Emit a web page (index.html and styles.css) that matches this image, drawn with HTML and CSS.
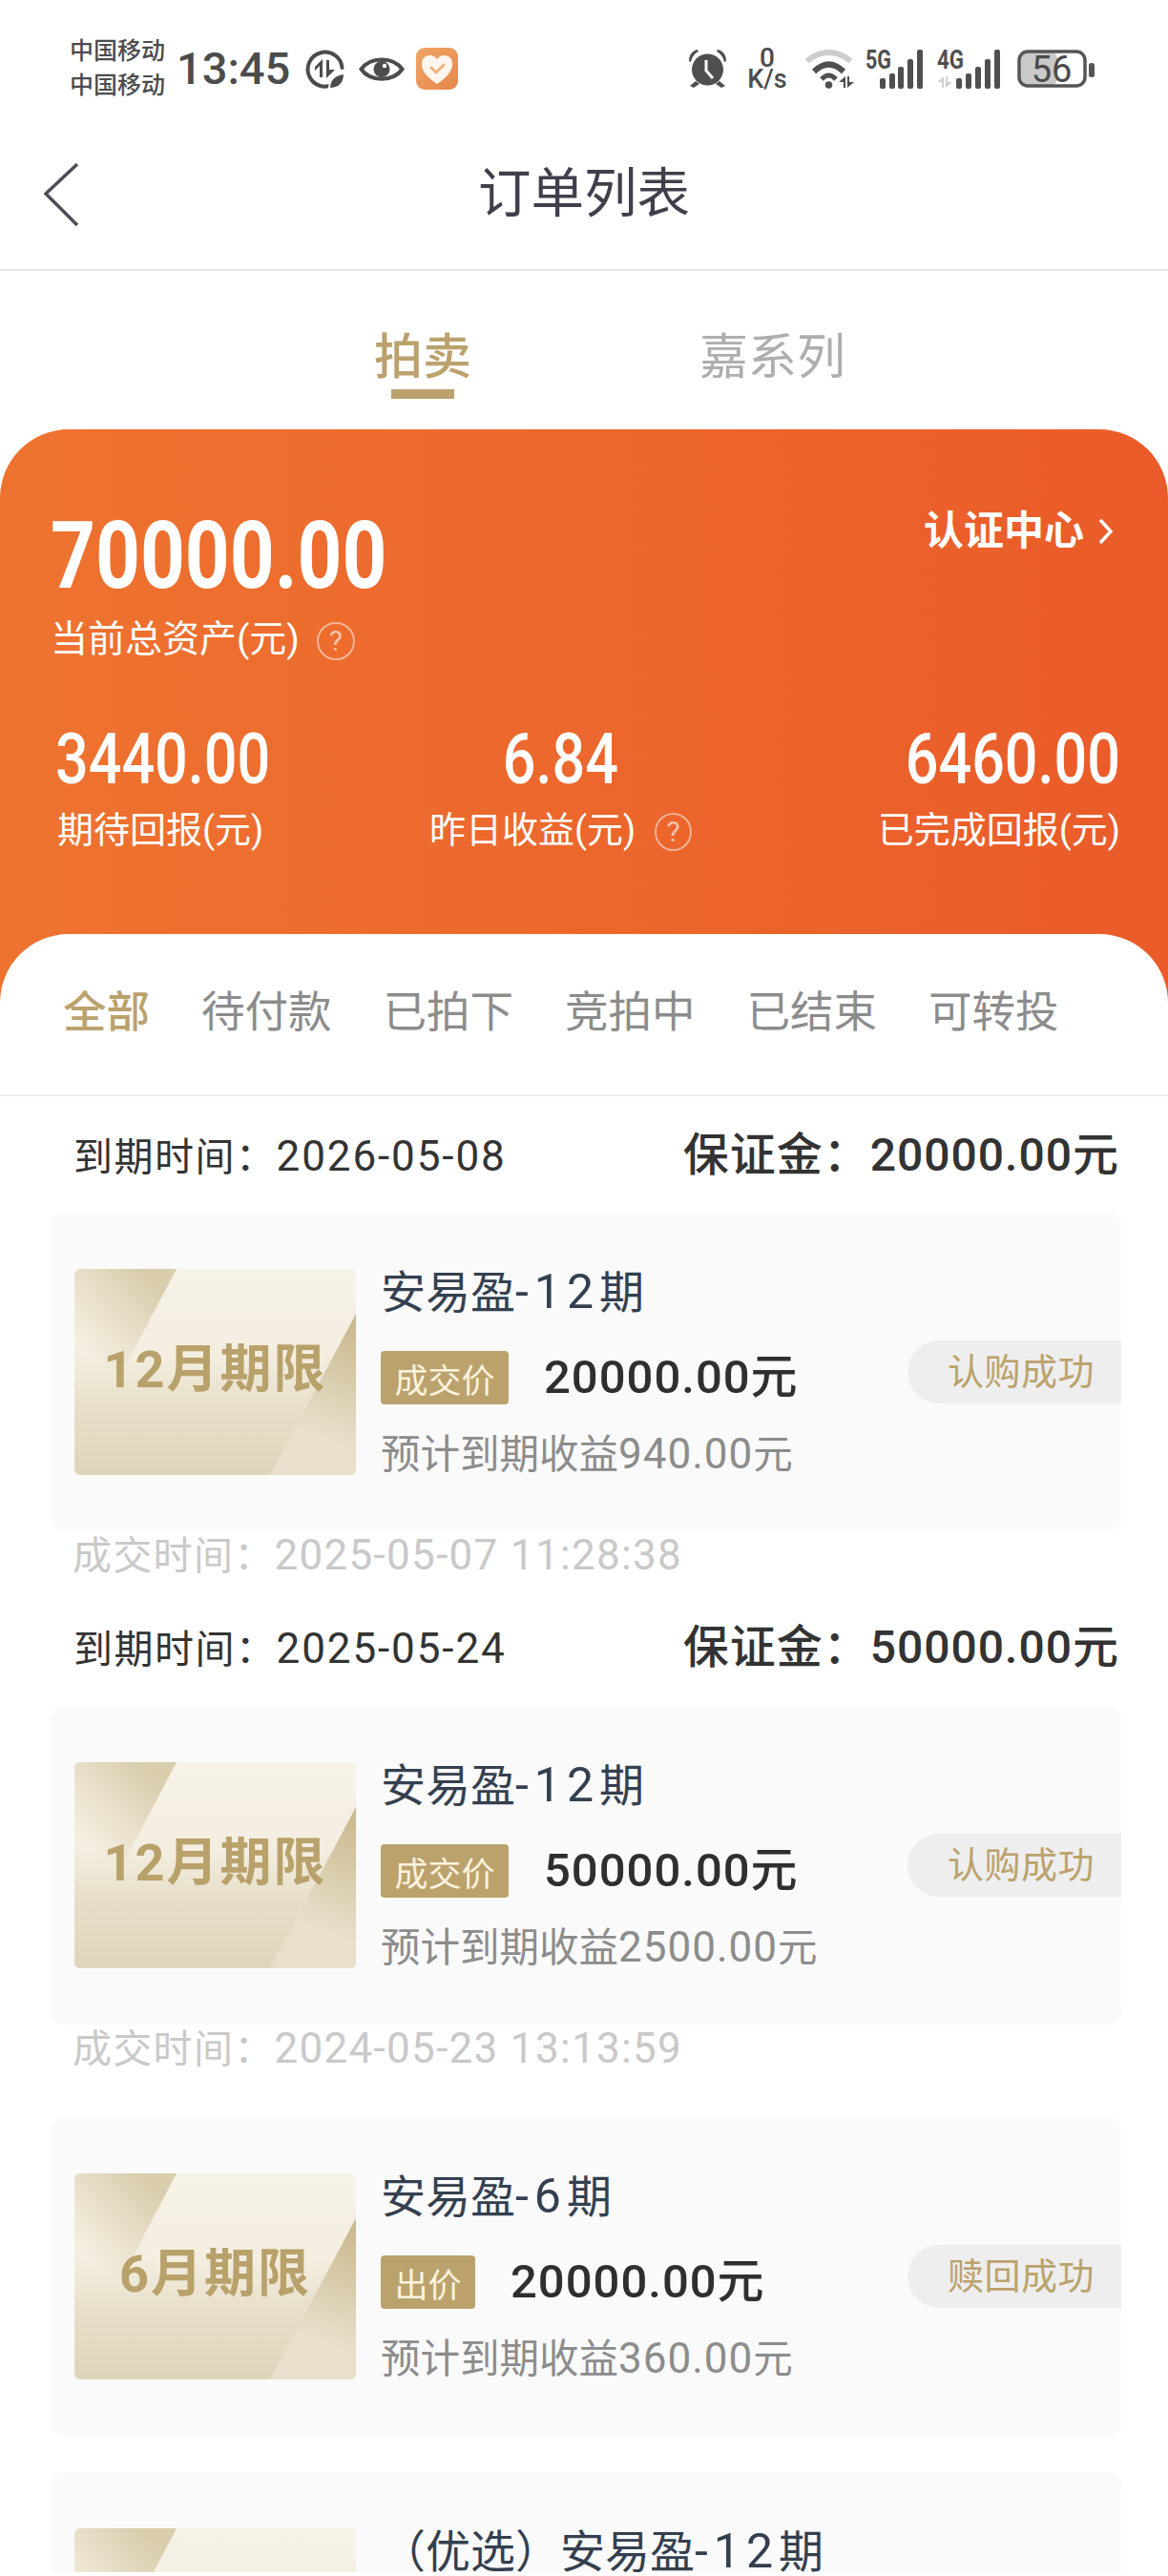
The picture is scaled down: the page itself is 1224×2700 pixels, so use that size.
FILE: index.html
```html
<!DOCTYPE html>
<html lang="zh-CN">
<head>
    <meta charset="UTF-8">
    <meta name="viewport" content="width=device-width, initial-scale=1.0">
    <title>订单列表</title>
    <link rel="stylesheet" href="styles.css">
</head>
<body>
    <svg class="svg-defs" aria-hidden="true">
        <defs>
            <linearGradient id="thumbBase" x1="0" y1="0" x2="0" y2="1">
                <stop offset="0" stop-color="#f6f2e6" />
                <stop offset="0.42" stop-color="#f3eee0" />
                <stop offset="0.68" stop-color="#e6dec8" />
                <stop offset="1" stop-color="#dfd5bb" />
            </linearGradient>
            <linearGradient id="thumbLeft" x1="20" y1="92" x2="88" y2="22" gradientUnits="userSpaceOnUse">
                <stop offset="0" stop-color="#d9cdae" stop-opacity="0" />
                <stop offset="1" stop-color="#d9cdae" />
            </linearGradient>
            <linearGradient id="thumbRight" x1="288" y1="62" x2="245" y2="170" gradientUnits="userSpaceOnUse">
                <stop offset="0" stop-color="#cbbb92" />
                <stop offset="1" stop-color="#e8e0cc" />
            </linearGradient>
            <symbol id="thumbArt" viewBox="0 0 295 216" preserveAspectRatio="none">
                <rect width="295" height="216" fill="url(#thumbBase)" />
                <polygon points="0,0 107,0 50,108 0,108" fill="url(#thumbLeft)" />
                <polygon points="295,47 295,216 205,216" fill="url(#thumbRight)" />
            </symbol>
        </defs>
    </svg>

    <div class="page">
        <!-- 状态栏 -->
        <div class="status-bar">
            <div class="status-left">
                <div class="carrier">
                    <span>中国移动</span>
                    <span>中国移动</span>
                </div>
                <span class="clock">13:45</span>
                <svg class="ic-saver" width="41" height="41" viewBox="0 0 41 41">
                    <path d="M30 36 A18 18 0 1 1 38.500 19" fill="none" stroke="#4c4c4c" stroke-width="4" stroke-linecap="round" />
                    <polygon points="18,10 18,29 15,29 15,17 10,22 10,18" fill="#4c4c4c" />
                    <polygon points="22,11 25,11 25,21 31,21 22,30" fill="#4c4c4c" />
                    <path d="M25 41 C25 31 31 26 41 25 C41 35 36 41 25 41 Z" fill="#4c4c4c" stroke="#fff" stroke-width="2" />
                </svg>
                <svg class="ic-eye" width="48" height="31" viewBox="0 0 48 31">
                    <path d="M2.5 15.5 C12 2 36 2 45.5 15.5 C36 29 12 29 2.5 15.5 Z" fill="none" stroke="#4c4c4c" stroke-width="4" />
                    <circle cx="24" cy="15.5" r="8.5" fill="#4c4c4c" />
                    <circle cx="27" cy="12" r="2.2" fill="#fff" />
                </svg>
                <svg class="ic-health" width="44" height="44" viewBox="0 0 44 44">
                    <defs>
                        <linearGradient id="healthBg" x1="0" y1="0" x2="1" y2="1">
                            <stop offset="0" stop-color="#f0a566" />
                            <stop offset="1" stop-color="#e8874c" />
                        </linearGradient>
                    </defs>
                    <rect width="44" height="44" rx="9" fill="url(#healthBg)" />
                    <path d="M22 38 C12 31 6 25 6 17 C6 11 10 8 14.5 8 C18 8 20.500 10 22 12 C23.500 10 26 8 29.500 8 C34 8 38 11 38 17 C38 25 32 31 22 38 Z" fill="#fdf6ee" />
                    <path d="M16 21 L21 26 L29 18" fill="none" stroke="#eeb27c" stroke-width="3" stroke-linecap="round" stroke-linejoin="round" />
                </svg>
            </div>
            <div class="status-right">
                <svg class="ic-alarm" width="41" height="40" viewBox="0 0 41 40">
                    <circle cx="20.500" cy="21" r="16.500" fill="#4f4f4f" />
                    <path d="M1 12 C1 6 4 1 10 0 L11 2 C7 4 4 8 3 13 Z" fill="#4f4f4f" />
                    <path d="M40 12 C40 6 37 1 31 0 L30 2 C34 4 37 8 38 13 Z" fill="#4f4f4f" />
                    <path d="M8 33 L2 38 L6 40 L12 36 Z" fill="#4f4f4f" />
                    <path d="M33 33 L39 38 L35 40 L29 36 Z" fill="#4f4f4f" />
                    <path d="M19 11 V22 L26 30" fill="none" stroke="#fff" stroke-width="3" />
                </svg>
                <div class="net-speed">
                    <span class="net-speed-num">0</span>
                    <span class="net-speed-unit">K/s</span>
                </div>
                <svg class="ic-wifi" width="52" height="41" viewBox="0 0 52 41">
                    <path d="M2.500 12 Q25.500 -6 48.500 12" fill="none" stroke="#cdcdcd" stroke-width="6" />
                    <path d="M10 23 Q25.500 8 41 23" fill="none" stroke="#4f4f4f" stroke-width="6" />
                    <path d="M18 31 Q25.500 23 33 31" fill="none" stroke="#4f4f4f" stroke-width="5" />
                    <circle cx="25.500" cy="37" r="3.800" fill="#4f4f4f" />
                    <polygon points="43,28 43,40 41,40 41,34 36,34" fill="#4f4f4f" />
                    <polygon points="45,28 47,28 47,34 52,34 45,40" fill="#4f4f4f" />
                </svg>
                <svg class="ic-signal" width="62" height="41" viewBox="0 0 62 41">
                    <text class="signal-label" x="0" y="20" textLength="27" lengthAdjust="spacingAndGlyphs">5G</text>
                    <rect x="15" y="30" width="6" height="11" rx="2" fill="#4f4f4f" />
                    <rect x="25" y="25" width="6" height="16" rx="2" fill="#4f4f4f" />
                    <rect x="34" y="18" width="6" height="23" rx="2" fill="#4f4f4f" />
                    <rect x="44" y="10" width="6" height="31" rx="2" fill="#4f4f4f" />
                    <rect x="54" y="0" width="6" height="41" rx="2" fill="#4f4f4f" />
                </svg>
                <svg class="ic-signal ic-signal-4g" width="67" height="41" viewBox="0 0 67 41">
                    <text class="signal-label" x="0" y="20" textLength="28" lengthAdjust="spacingAndGlyphs">4G</text>
                    <polygon points="7,28 7,40 5,40 5,34 0,34" fill="#d0d0d0" />
                    <polygon points="9,28 11,28 11,34 16,34 9,40" fill="#d0d0d0" />
                    <rect x="20" y="30" width="6" height="11" rx="2" fill="#4f4f4f" />
                    <rect x="30" y="25" width="6" height="16" rx="2" fill="#4f4f4f" />
                    <rect x="40" y="18" width="6" height="23" rx="2" fill="#4f4f4f" />
                    <rect x="50" y="10" width="6" height="31" rx="2" fill="#4f4f4f" />
                    <rect x="60" y="0" width="6" height="41" rx="2" fill="#4f4f4f" />
                </svg>
                <svg class="ic-battery" width="81" height="41" viewBox="0 0 81 41">
                    <rect x="2" y="2" width="40" height="36" rx="8" fill="#c9c9c9" />
                    <rect x="2" y="2" width="69" height="36" rx="9" fill="none" stroke="#555" stroke-width="3.500" />
                    <rect x="75" y="14" width="6" height="15" rx="2.500" fill="#555" />
                    <text class="battery-num" x="36" y="34" text-anchor="middle">56</text>
                </svg>
            </div>
        </div>

        <!-- 标题栏 -->
        <div class="nav-bar">
            <svg class="nav-back" width="37" height="68" viewBox="0 0 37 68">
                <polyline points="35,2 2,33 35,66" fill="none" stroke="#4d4d57" stroke-width="3.500" />
            </svg>
            <h1 class="nav-title">订单列表</h1>
        </div>

        <div class="series-tabs">
            <div class="series-tab series-tab-active">
                <span>拍卖</span>
                <i class="series-tab-line"></i>
            </div>
            <div class="series-tab">
                <span>嘉系列</span>
            </div>
        </div>

        <div class="asset-panel">
            <div class="asset-top">
                <div>
                    <div class="asset-total"><span class="num-narrow">70000.00</span></div>
                    <div class="asset-label">当前总资产(元)<span class="help-icon">?</span></div>
                </div>
                <div class="cert-link">
                    认证中心
                    <svg width="17" height="28" viewBox="0 0 17 28">
                        <polyline points="3,2 14,14 3,26" fill="none" stroke="#fff" stroke-width="3.500" />
                    </svg>
                </div>
            </div>
            <div class="asset-stats">
                <div class="stat stat-first">
                    <div class="stat-num"><span class="num-narrow">3440.00</span></div>
                    <div class="stat-label">期待回报(元)</div>
                </div>
                <div class="stat stat-mid">
                    <div class="stat-num"><span class="num-narrow">6.84</span></div>
                    <div class="stat-label">昨日收益(元)<span class="help-icon">?</span></div>
                </div>
                <div class="stat stat-end">
                    <div class="stat-num"><span class="num-narrow">6460.00</span></div>
                    <div class="stat-label">已完成回报(元)</div>
                </div>
            </div>

            <div class="order-panel">
                <div class="filter-tabs">
                    <span class="filter-tab filter-tab-active">全部</span>
                    <span class="filter-tab">待付款</span>
                    <span class="filter-tab">已拍下</span>
                    <span class="filter-tab">竞拍中</span>
                    <span class="filter-tab">已结束</span>
                    <span class="filter-tab">可转投</span>
                </div>

                <div class="order-head">
                    <span class="order-date">到期时间：<span class="date-num">2026-05-08</span></span>
                    <span class="order-deposit">保证金：20000.00元</span>
                </div>
                <div class="order-card">
                    <div class="thumb">
                        <svg class="thumb-art"><use href="#thumbArt" /></svg>
                        <span class="thumb-text">12月期限</span>
                    </div>
                    <div class="order-info">
                        <div class="order-name">安易盈<span class="name-num">-12</span>期</div>
                        <div class="order-price-row">
                            <span class="price-tag">成交价</span>
                            <span class="price">20000.00元</span>
                        </div>
                        <div class="order-sub">预计到期收益<span class="sub-num">940.00</span>元</div>
                    </div>
                    <div class="status-pill">认购成功</div>
                </div>
                <div class="order-foot">成交时间：<span class="date-num">2025-05-07 11:28:38</span></div>

                <div class="order-head order-head-next">
                    <span class="order-date">到期时间：<span class="date-num">2025-05-24</span></span>
                    <span class="order-deposit">保证金：50000.00元</span>
                </div>
                <div class="order-card">
                    <div class="thumb">
                        <svg class="thumb-art"><use href="#thumbArt" /></svg>
                        <span class="thumb-text">12月期限</span>
                    </div>
                    <div class="order-info">
                        <div class="order-name">安易盈<span class="name-num">-12</span>期</div>
                        <div class="order-price-row">
                            <span class="price-tag">成交价</span>
                            <span class="price">50000.00元</span>
                        </div>
                        <div class="order-sub">预计到期收益<span class="sub-num">2500.00</span>元</div>
                    </div>
                    <div class="status-pill">认购成功</div>
                </div>
                <div class="order-foot">成交时间：<span class="date-num">2024-05-23 13:13:59</span></div>

                <div class="order-card order-card-plain">
                    <div class="thumb">
                        <svg class="thumb-art"><use href="#thumbArt" /></svg>
                        <span class="thumb-text">6月期限</span>
                    </div>
                    <div class="order-info">
                        <div class="order-name">安易盈<span class="name-num">-6</span>期</div>
                        <div class="order-price-row">
                            <span class="price-tag">出价</span>
                            <span class="price">20000.00元</span>
                        </div>
                        <div class="order-sub">预计到期收益<span class="sub-num">360.00</span>元</div>
                    </div>
                    <div class="status-pill">赎回成功</div>
                </div>

                <div class="order-card order-card-plain">
                    <div class="thumb">
                        <svg class="thumb-art"><use href="#thumbArt" /></svg>
                        <span class="thumb-text">12月期限</span>
                    </div>
                    <div class="order-info">
                        <div class="order-name">（优选）安易盈<span class="name-num">-12</span>期</div>
                    </div>
                </div>
            </div>
        </div>
    </div>
</body>
</html>
```

FILE: styles.css
```css
* {
    box-sizing: border-box;
}

html,
body {
    margin: 0;
    background: #fff;
}

body {
    font-family: Roboto, "Noto Sans CJK SC", sans-serif;
}

.svg-defs {
    position: absolute;
    width: 0;
    height: 0;
}

.page {
    width: 1224px;
    height: 2696px;
    overflow: hidden;
    background: #fff;
}

/* status bar */
.status-bar {
    height: 144px;
    padding: 0 77px 0 73px;
    display: flex;
    justify-content: space-between;
    align-items: center;
    color: #4c4c4c;
}

.status-left,
.status-right {
    display: flex;
    align-items: center;
}

.carrier {
    display: flex;
    flex-direction: column;
    font-size: 25px;
    line-height: 36px;
    font-weight: 500;
}

.clock {
    margin-left: 12px;
    font-size: 47px;
    line-height: 50px;
    font-weight: 500;
}

.ic-saver {
    margin-left: 16px;
}

.ic-eye {
    margin-left: 15px;
}

.ic-health {
    margin-left: 12px;
}

.net-speed {
    margin-left: 21px;
    width: 42px;
    display: flex;
    flex-direction: column;
    align-items: center;
    font-weight: 500;
}

.net-speed-num {
    font-size: 28px;
    line-height: 22px;
}

.net-speed-unit {
    font-size: 27px;
    line-height: 22px;
    white-space: nowrap;
}

.ic-wifi {
    margin-left: 18px;
}

.ic-signal {
    margin-left: 12px;
    overflow: visible;
}

.ic-signal-4g {
    margin-left: 13px;
}

.signal-label {
    font-size: 28px;
    font-weight: 700;
    fill: #4f4f4f;
}

.ic-battery {
    margin-left: 17px;
    overflow: visible;
}

.battery-num {
    font-size: 38px;
    fill: #4a4a4a;
}

/* nav */
.nav-bar {
    height: 140px;
    padding: 0 46px 18px;
    display: grid;
    grid-template-columns: 1fr auto 1fr;
    align-items: center;
    border-bottom: 2px solid #e6e6e6;
}

.nav-title {
    margin: 0;
    font-size: 55.5px;
    line-height: 70px;
    font-weight: 400;
    color: #40404c;
}

/* 拍卖 / 嘉系列 */
.series-tabs {
    height: 166px;
    padding: 61px 0 0 392px;
    display: flex;
    gap: 239px;
}

.series-tab {
    display: flex;
    flex-direction: column;
    align-items: center;
    font-size: 51px;
    line-height: 60px;
    color: #aeaeae;
}

.series-tab-active {
    color: #bba26d;
    font-weight: 500;
}

.series-tab-line {
    display: block;
    width: 66px;
    height: 10px;
    margin-top: 3px;
    background: #bba26d;
}

/* asset summary */
.asset-panel {
    padding-top: 84px;
    border-radius: 72px 72px 0 0;
    background: linear-gradient(90deg, #ee7330, #ea5b29);
    color: #fff;
}

.asset-top {
    padding: 0 57px 0 53px;
    display: flex;
    justify-content: space-between;
    align-items: flex-start;
}

.asset-total {
    font-size: 98px;
    line-height: 98px;
    font-weight: 700;
}

.num-narrow {
    display: inline-block;
    transform-origin: left center;
    transform: scaleX(0.835);
}

.asset-label {
    margin-top: 13px;
    display: flex;
    align-items: center;
    font-size: 39px;
    line-height: 50px;
}

.help-icon {
    width: 40px;
    height: 40px;
    margin-left: 18px;
    margin-top: 4px;
    display: inline-flex;
    align-items: center;
    justify-content: center;
    border: 2px solid rgba(255, 255, 255, 0.5);
    border-radius: 50%;
    font-size: 30px;
    line-height: 1;
    color: rgba(255, 255, 255, 0.6);
}

.stat-label .help-icon {
    margin-left: 20px;
}

.cert-link {
    display: flex;
    align-items: center;
    gap: 14px;
    font-size: 42px;
    line-height: 46px;
    font-weight: 700;
}

.asset-stats {
    margin-top: 64px;
    padding: 0 50px 84px 60px;
    display: grid;
    grid-template-columns: 390px 275px 1fr;
}

.stat-num {
    font-size: 74px;
    line-height: 74px;
    font-weight: 500;
}

.stat-num .num-narrow {
    transform: scaleX(0.825);
}

.stat-first .stat-num {
    margin-left: -2px;
}

.stat-label {
    margin-top: 12px;
    display: flex;
    align-items: center;
    font-size: 38px;
    line-height: 50px;
    white-space: nowrap;
}

.stat-mid .stat-num {
    text-align: center;
}

.stat-mid .num-narrow {
    transform-origin: center center;
}

.stat-end {
    text-align: right;
}

.stat-end .num-narrow {
    transform-origin: right center;
}

.stat-end .stat-label {
    justify-content: flex-end;
}

/* order list */
.order-panel {
    border-radius: 72px 72px 0 0;
    background: #fff;
}

.filter-tabs {
    height: 170px;
    padding: 0 0 2px 66px;
    display: flex;
    align-items: center;
    gap: 54px;
    border-bottom: 2px solid #eeeeee;
}

.filter-tab {
    font-size: 45.5px;
    line-height: 56px;
    color: #8c8c8c;
}

.filter-tab-active {
    color: #bba26d;
    font-weight: 500;
}

.order-head {
    height: 122px;
    padding: 32px 51px 0 77px;
    display: flex;
    justify-content: space-between;
    align-items: baseline;
    color: #333;
}

.order-head-next {
    height: 123px;
}

.order-date {
    font-size: 41px;
    line-height: 60px;
    letter-spacing: 1.5px;
}

.date-num {
    font-size: 44px;
}

.order-head .date-num {
    letter-spacing: 1.9px;
}

.order-deposit {
    font-size: 48px;
    line-height: 60px;
    font-weight: 500;
    letter-spacing: 1px;
}

.order-card {
    height: 334px;
    margin: 0 49px 0 53px;
    padding: 59px 0 0 25px;
    display: flex;
    align-items: flex-start;
    border-radius: 14px;
    background: #fafafa;
    overflow: hidden;
}

.order-card-plain {
    margin-top: 38px;
}

.order-foot + .order-card-plain {
    margin-top: 37px;
}

.thumb {
    position: relative;
    flex: none;
    width: 295px;
    height: 216px;
    border-radius: 6px;
    overflow: hidden;
    display: flex;
    align-items: center;
    justify-content: center;
}

.thumb-art {
    position: absolute;
    inset: 0;
    width: 100%;
    height: 100%;
}

.thumb-text {
    position: relative;
    margin-bottom: 4px;
    font-size: 54px;
    line-height: 60px;
    font-weight: 700;
    letter-spacing: 2px;
    color: #b9a16b;
}

.order-info {
    margin-left: 26px;
}

.order-name {
    font-size: 47px;
    line-height: 48px;
    color: #34404f;
    white-space: nowrap;
}

.name-num {
    font-size: 50px;
    letter-spacing: 6px;
}

.order-price-row {
    margin-top: 37px;
    display: flex;
    align-items: center;
    gap: 37px;
}

.price-tag {
    height: 56px;
    padding: 0 14.5px;
    display: flex;
    align-items: center;
    border-radius: 4px;
    font-size: 35px;
    background: #bba26d;
    color: #fbf3dd;
}

.price {
    font-size: 49px;
    line-height: 56px;
    font-weight: 500;
    letter-spacing: 1px;
    color: #2f2f2f;
}

.order-sub {
    margin-top: 27px;
    font-size: 41.5px;
    line-height: 50px;
    color: #8c8c8c;
    white-space: nowrap;
}

.sub-num {
    font-size: 44px;
    letter-spacing: 1px;
}

.status-pill {
    flex: none;
    width: 224px;
    height: 66px;
    margin-top: 75px;
    margin-left: auto;
    padding-left: 42px;
    border-radius: 33px 0 0 33px;
    background: #eeeeee;
    font-size: 38px;
    line-height: 66px;
    letter-spacing: 0.5px;
    color: #bba26d;
}

.order-foot {
    height: 60px;
    padding-left: 76px;
    font-size: 41px;
    line-height: 50px;
    letter-spacing: 1.3px;
    color: #c9c9c9;
}
```
